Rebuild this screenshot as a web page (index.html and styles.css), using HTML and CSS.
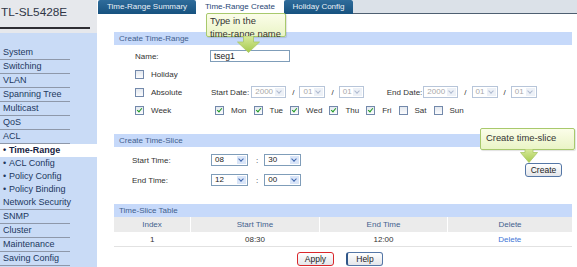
FILE: index.html
```html
<!DOCTYPE html>
<html lang="en">
<head>
  <meta charset="UTF-8">
  <meta name="viewport" content="width=device-width, initial-scale=1.0">
  <title>TL-SL5428E - Time-Range Create</title>
  <link rel="stylesheet" href="styles.css">
</head>
<body>
<div class="page">

  <!-- left menu -->
  <aside class="side">
    <div class="brand"><span class="brand-name">TL-SL5428E</span></div>
    <nav class="menu">
      <a>System</a>
      <a>Switching</a>
      <a>VLAN</a>
      <a>Spanning Tree</a>
      <a>Multicast</a>
      <a>QoS</a>
      <a>ACL</a>
      <a class="sub active">Time-Range</a>
      <a class="sub">ACL Config</a>
      <a class="sub">Policy Config</a>
      <a class="sub">Policy Binding</a>
      <a>Network Security</a>
      <a>SNMP</a>
      <a>Cluster</a>
      <a>Maintenance</a>
      <a>Saving Config</a>
    </nav>
  </aside>

  <main class="main">
    <div class="tabs">
      <span class="tab tab-sum">Time-Range Summary</span>
      <span class="tab tab-create on">Time-Range Create</span>
      <span class="tab tab-hol">Holiday Config</span>
      <span class="tab-fill"></span>
    </div>

    <div class="content">
      <div class="band">Create Time-Range</div>
      <div class="row">
        <span class="lbl">Name:</span>
        <span class="inp">tseg1</span>
      </div>
      <div class="row">
        <span class="lbl"><i class="cb"></i>Holiday</span>
      </div>
      <div class="row">
        <span class="lbl"><i class="cb"></i>Absolute</span>
        <span class="date">
          Start Date:
          <span class="sel dis w35">2000</span>
          <span class="slash">/</span>
          <span class="sel dis w26">01</span>
          <span class="slash">/</span>
          <span class="sel dis w25">01</span>
        </span>
        <span class="date date-end">
          End Date:
          <span class="sel dis w35">2000</span>
          <span class="slash">/</span>
          <span class="sel dis w26">01</span>
          <span class="slash">/</span>
          <span class="sel dis w26">01</span>
        </span>
      </div>
      <div class="row">
        <span class="lbl"><i class="cb on"></i>Week</span>
        <span class="days">
          <span class="day"><i class="cb on"></i>Mon</span>
          <span class="day"><i class="cb on"></i>Tue</span>
          <span class="day"><i class="cb on"></i>Wed</span>
          <span class="day"><i class="cb on"></i>Thu</span>
          <span class="day"><i class="cb on"></i>Fri</span>
          <span class="day"><i class="cb"></i>Sat</span>
          <span class="day"><i class="cb"></i>Sun</span>
        </span>
      </div>

      <div class="band band-slice">Create Time-Slice</div>
      <div class="slice">
        <div class="slice-rows">
          <div class="row row-time">
            <span class="lbl lbl-time">Start Time:</span>
            <span class="sel w37">08</span>
            <span class="colon">:</span>
            <span class="sel w37">30</span>
          </div>
          <div class="row row-time">
            <span class="lbl lbl-time">End Time:</span>
            <span class="sel w37">12</span>
            <span class="colon">:</span>
            <span class="sel w37">00</span>
          </div>
        </div>
        <button class="btn btn-create">Create</button>
      </div>

      <div class="band band-table">Time-Slice Table</div>
      <table class="grid">
        <tr>
          <th class="c1">Index</th>
          <th class="c2">Start Time</th>
          <th class="c3">End Time</th>
          <th class="c4">Delete</th>
        </tr>
        <tr>
          <td>1</td>
          <td>08:30</td>
          <td>12:00</td>
          <td><a class="link">Delete</a></td>
        </tr>
      </table>

      <div class="actions">
        <button class="btn btn-apply">Apply</button>
        <button class="btn btn-help">Help</button>
      </div>
    </div>
  </main>

  <!-- callouts over the form -->
  <div class="tip tip-name">Type in the<br>time-range name</div>
  <svg class="arrow arrow-name" width="23" height="17" viewBox="0 0 23 17">
    <defs>
      <linearGradient id="ga" x1="0" y1="0" x2="0" y2="1">
        <stop offset="0" stop-color="#d8ea9c"/>
        <stop offset="1" stop-color="#a6ca4c"/>
      </linearGradient>
    </defs>
    <polygon points="6.5,0 16.5,0 16.5,6 22.5,6 11.5,16.5 0.5,6 6.5,6" fill="url(#ga)" stroke="#a9c866" stroke-width="0.8"/>
  </svg>

  <div class="tip tip-slice">Create time-slice</div>
  <svg class="arrow arrow-slice" width="18" height="14" viewBox="0 0 18 14">
    <defs>
      <linearGradient id="gb" x1="0" y1="0" x2="0" y2="1">
        <stop offset="0" stop-color="#d8ea9c"/>
        <stop offset="1" stop-color="#a6ca4c"/>
      </linearGradient>
    </defs>
    <polygon points="5,0 13,0 13,3.5 17.5,3.5 9,13.5 0.5,3.5 5,3.5" fill="url(#gb)" stroke="#a9c866" stroke-width="0.8"/>
  </svg>

</div>
</body>
</html>
```

FILE: styles.css
```css
/* General */
body {
  margin: 0;
  padding: 0;
  background: #fff;
  font-family: "Liberation Sans", Arial, sans-serif;
  color: #333;
}

.page {
  position: relative;
  display: flex;
  width: 577px;
  height: 267px;
  overflow: hidden;
}

/* Left menu */
.side {
  width: 97px;
  flex: none;
  background: #c9dbf6;
}

.brand {
  height: 33px;
  background: #e6e8ec;
}

.brand-name {
  display: block;
  width: 89px;
  height: 27px;
  padding-left: 1px;
  line-height: 24px;
  font-size: 11.8px;
  color: #2f3646;
  border-bottom: 2px solid #2e2e33;
}

.menu {
  padding-top: 13px;
}

.menu a {
  display: block;
  height: 14px;
  line-height: 13px;
  padding-left: 3px;
  font-size: 9px;
  color: #22385f;
  white-space: nowrap;
  background: linear-gradient(#8e98aa, #8e98aa) no-repeat 0 100% / 70px 1px;
}

.menu a.sub {
  height: 13px;
  line-height: 13px;
  background: none;
}

.menu a.sub::before {
  content: "\2022";
  display: inline-block;
  width: 6px;
}

.menu a.active {
  background: #fff;
  font-weight: bold;
  color: #16223f;
}

/* Main area */
.main {
  flex: 1;
  min-width: 0;
}

.tabs {
  display: flex;
  height: 14px;
  padding-left: 1px;
}

.tab {
  height: 14px;
  line-height: 14px;
  font-size: 8px;
  text-align: center;
  color: #e9f0f7;
  background: linear-gradient(#2f6c9b, #17527f);
  border-radius: 2px 2px 0 0;
  white-space: nowrap;
}

.tab-sum { width: 98px; }
.tab-create { width: 88px; }
.tab-hol { width: 69px; }

.tab.on {
  background: #fff;
  color: #274674;
}

.tab-fill {
  flex: 1;
  height: 13px;
  background: #dbe1e8;
  border-bottom: 1px solid #4e5f71;
}

.content {
  padding: 0 5px 0 17px;
  font-size: 8px;
}

/* Section headers */
.band {
  height: 13px;
  line-height: 13px;
  margin-top: 18px;
  padding-left: 5px;
  background: #c6d9fa;
  color: #435f8d;
}

.band-slice { margin-top: 15px; }
.band-table { margin-top: 14px; }

/* Form rows */
.row {
  display: flex;
  align-items: center;
  height: 18px;
  padding-left: 21px;
  white-space: nowrap;
}

.band + .row {
  margin-top: 2px;
}

.lbl {
  display: flex;
  align-items: center;
  width: 75px;
  flex: none;
}

.inp {
  box-sizing: border-box;
  width: 80px;
  height: 12px;
  line-height: 10px;
  padding-left: 3px;
  font-size: 8.5px;
  color: #222;
  border: 1px solid #7f9db9;
}

/* Checkboxes */
.cb {
  position: relative;
  display: inline-block;
  box-sizing: border-box;
  width: 9px;
  height: 9px;
  margin-right: 7px;
  border: 1px solid #7389ab;
  background: linear-gradient(#e3e8ef, #fcfcfd);
}

.cb.on::after {
  content: "";
  position: absolute;
  left: 2px;
  top: 0;
  width: 2px;
  height: 4px;
  border: solid #1f9a22;
  border-width: 0 1.5px 1.5px 0;
  transform: rotate(40deg);
}

.days {
  display: flex;
  align-items: center;
  gap: 7px;
  padding-left: 5px;
}

.day {
  display: flex;
  align-items: center;
}

.day .cb {
  margin-right: 7px;
}

/* Select boxes */
.sel {
  position: relative;
  display: inline-block;
  box-sizing: border-box;
  height: 12px;
  line-height: 10px;
  padding-left: 3px;
  font-size: 8px;
  color: #222;
  border: 1px solid #7f9db9;
  background: #fff;
}

.sel::after {
  content: "";
  position: absolute;
  right: 1px;
  top: 1px;
  width: 9px;
  height: 8px;
  background: #d9e5f8;
}

.sel::before {
  content: "";
  position: absolute;
  right: 4px;
  top: 2px;
  width: 3px;
  height: 3px;
  border: solid #3e66ae;
  border-width: 0 1.5px 1.5px 0;
  transform: rotate(45deg);
  z-index: 1;
}

.sel.dis {
  color: #a9a9a9;
  border-color: #b7c5d9;
}

.sel.dis::after { background: #edf1f7; }
.sel.dis::before { border-color: #aebad0; }

.w25 { width: 25px; }
.w26 { width: 26px; }
.w35 { width: 35px; }
.w37 { width: 37px; }

.date {
  display: flex;
  align-items: center;
  padding-left: 1px;
}

.date > .sel.w35 {
  margin-left: 2px;
}

.slash {
  margin: 0 5px 0 6px;
}

.date-end {
  margin-left: 22px;
}

.date-end > .sel.w35 {
  margin-left: 1px;
}

/* Time slice */
.slice {
  display: flex;
  align-items: center;
  margin-top: 3px;
}

.slice-rows {
  flex: 1;
}

.row-time {
  height: 20px;
  padding-left: 18px;
}

.lbl-time {
  width: 79px;
}

.colon {
  margin: 0 6px 0 8px;
}

/* Buttons */
.btn {
  box-sizing: border-box;
  height: 14px;
  padding: 0;
  font-family: "Liberation Sans", Arial, sans-serif;
  font-size: 8.5px;
  color: #222;
  border: 1px solid #5476a6;
  border-radius: 3px;
  background: linear-gradient(#ffffff, #e4e6ea);
  cursor: pointer;
}

.btn-create {
  width: 37px;
  margin-right: 10px;
}

.actions {
  display: flex;
  justify-content: center;
  gap: 12px;
  margin-top: 5px;
  padding-right: 6px;
}

.btn-apply {
  width: 37px;
  border: 1.5px solid #d9262b;
}

.btn-help {
  width: 37px;
  border-left: 2px solid #2f5688;
}

/* Table */
.grid {
  width: 100%;
  border-collapse: collapse;
  table-layout: fixed;
  font-size: 8px;
}

.grid th {
  height: 15px;
  padding: 0;
  font-weight: normal;
  color: #43628f;
  background: #ebebeb;
  border-right: 1px solid #fff;
}

.grid th:last-child { border-right: none; }

.grid td {
  height: 14px;
  padding: 0;
  text-align: center;
  color: #333;
  border-bottom: 1px solid #e2e2e2;
}

.c1 { width: 76px; }
.c2 { width: 128px; }
.c3 { width: 127px; }

.link {
  color: #3f76d6;
}

/* Callouts */
.tip {
  position: absolute;
  box-sizing: border-box;
  padding: 1px 3px;
  font-size: 9.4px;
  line-height: 12.5px;
  white-space: nowrap;
  color: #333;
  border: 1px solid #a8c96c;
  border-radius: 2px;
  background: linear-gradient(#fbfde9, #eaf4c6);
  box-shadow: 1px 1px 1px rgba(0, 0, 0, 0.12);
  z-index: 5;
}

.tip-name {
  left: 206px;
  top: 13px;
  width: 80px;
  height: 24px;
}

.tip-slice {
  left: 480px;
  top: 128px;
  width: 95px;
  height: 22px;
  padding-top: 3px;
  padding-left: 5px;
}

.arrow {
  position: absolute;
  z-index: 6;
}

.arrow-name {
  left: 237px;
  top: 36px;
}

.arrow-slice {
  left: 520px;
  top: 149px;
}
```
